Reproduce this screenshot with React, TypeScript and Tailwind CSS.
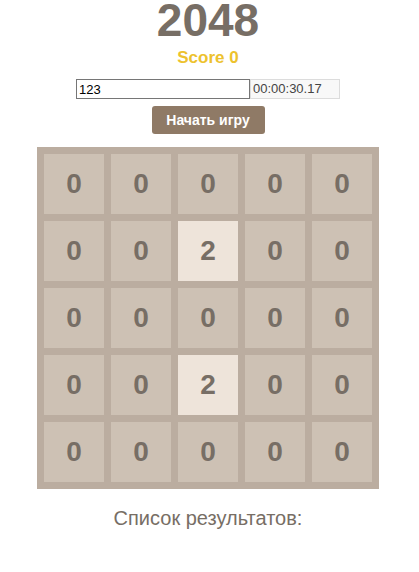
const board = [
  [0, 0, 0, 0, 0],
  [0, 0, 2, 0, 0],
  [0, 0, 0, 0, 0],
  [0, 0, 2, 0, 0],
  [0, 0, 0, 0, 0],
];

export default function App() {
  return (
    <div className="w-[416px] h-[572px] bg-white flex flex-col items-center font-['Liberation_Sans',Arial,sans-serif]">
      <h1 className="text-[46px] leading-[40px] font-bold text-[#776e65]">2048</h1>
      <div className="mt-[8px] text-[17px] font-bold text-[#edc22e] leading-[20px]">Score 0</div>
      <div className="mt-[11px] flex items-center">
        <input
          defaultValue="123"
          className="w-[174px] h-[20px] border border-[#767676] px-[2px] text-[13px] text-black outline-none"
        />
        <div className="w-[90px] h-[20px] border border-[#dcdcdc] bg-[#f8f8f8] text-[13px] text-[#444] leading-[18px] px-[2px]">
          00:00:30.17
        </div>
      </div>
      <button className="mt-[7px] w-[113px] h-[28px] rounded-[3px] bg-[#8f7a66] text-white text-[14px] font-bold">
        Начать игру
      </button>
      <div className="mt-[13px] bg-[#bbada0] p-[7px] grid grid-cols-5 gap-[7px]">
        {board.flat().map((v, i) => (
          <div
            key={i}
            className={`w-[60px] h-[60px] flex items-center justify-center text-[28px] font-bold text-[#776e65] ${
              v === 2 ? 'bg-[#eee4da]' : 'bg-[#cdc1b4]'
            }`}
          >
            {v}
          </div>
        ))}
      </div>
      <div className="mt-[18px] text-[20px] leading-[23px] text-[#776e65]">Список результатов:</div>
    </div>
  );
}
